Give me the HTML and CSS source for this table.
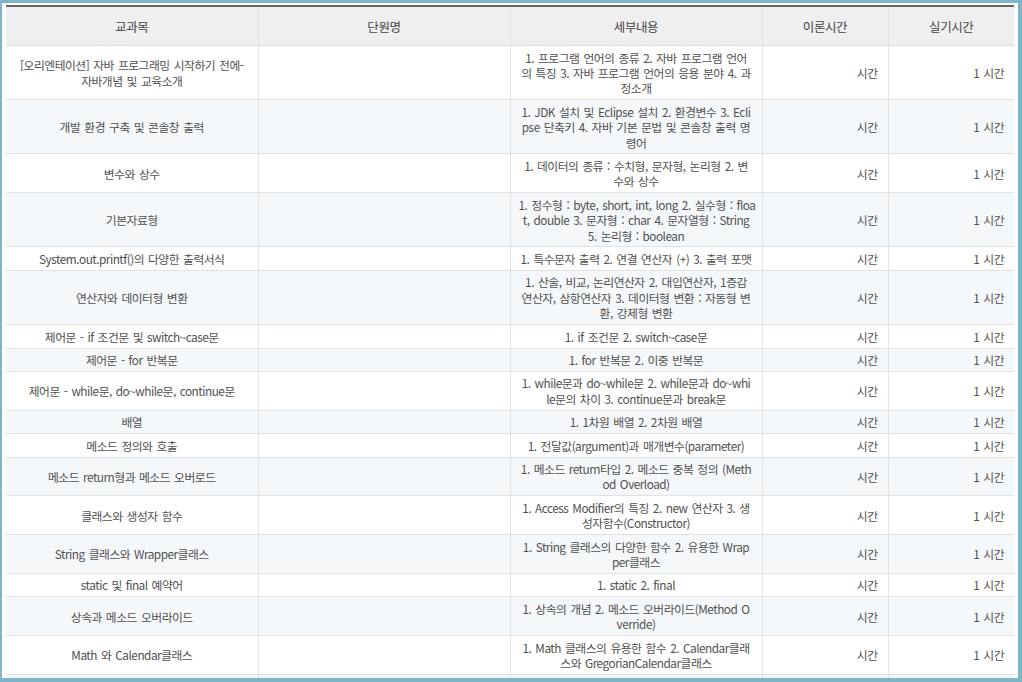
FILE: index.html
```html
<!DOCTYPE html>
<html lang="ko">
<head>
<meta charset="utf-8">
<title>교과목</title>
<link rel="stylesheet" href="styles.css">
</head>
<body>
<div class="frame">
  <table class="curriculum">
    <colgroup>
      <col class="c-subject"><col class="c-unit"><col class="c-detail"><col class="c-time"><col class="c-time">
    </colgroup>
    <thead>
      <tr><th>교과목</th><th>단원명</th><th>세부내용</th><th>이론시간</th><th>실기시간</th></tr>
    </thead>
    <tbody>
      <tr><td class="subject">[오리엔테이션] 자바 프로그래밍 시작하기 전에-<br>자바개념 및 교육소개</td><td></td><td class="detail">1. 프로그램 언어의 종류 2. 자바 프로그램 언어<br>의 특징 3. 자바 프로그램 언어의 응용 분야 4. 과<br>정소개</td><td class="time">시간</td><td class="time">1 시간</td></tr>
      <tr><td class="subject">개발 환경 구축 및 콘솔창 출력</td><td></td><td class="detail">1. JDK 설치 및 Eclipse 설치 2. 환경변수 3. Ecli<br>pse 단축키 4. 자바 기본 문법 및 콘솔창 출력 명<br>령어</td><td class="time">시간</td><td class="time">1 시간</td></tr>
      <tr><td class="subject">변수와 상수</td><td></td><td class="detail">1. 데이터의 종류 : 수치형, 문자형, 논리형 2. 변<br>수와 상수</td><td class="time">시간</td><td class="time">1 시간</td></tr>
      <tr><td class="subject">기본자료형</td><td></td><td class="detail">1. 정수형 : byte, short, int, long 2. 실수형 : floa<br>t, double 3. 문자형 : char 4. 문자열형 : String<br>5. 논리형 : boolean</td><td class="time">시간</td><td class="time">1 시간</td></tr>
      <tr><td class="subject">System.out.printf()의 다양한 출력서식</td><td></td><td class="detail">1. 특수문자 출력 2. 연결 연산자 (+) 3. 출력 포맷</td><td class="time">시간</td><td class="time">1 시간</td></tr>
      <tr><td class="subject">연산자와 데이터형 변환</td><td></td><td class="detail">1. 산술, 비교, 논리연산자 2. 대입연산자, 1증감<br>연산자, 삼항연산자 3. 데이터형 변환 : 자동형 변<br>환, 강제형 변환</td><td class="time">시간</td><td class="time">1 시간</td></tr>
      <tr><td class="subject">제어문 - if 조건문 및 switch~case문</td><td></td><td class="detail">1. if 조건문 2. switch~case문</td><td class="time">시간</td><td class="time">1 시간</td></tr>
      <tr><td class="subject">제어문 - for 반복문</td><td></td><td class="detail">1. for 반복문 2. 이중 반복문</td><td class="time">시간</td><td class="time">1 시간</td></tr>
      <tr><td class="subject">제어문 - while문, do~while문, continue문</td><td></td><td class="detail">1. while문과 do~while문 2. while문과 do~whi<br>le문의 차이 3. continue문과 break문</td><td class="time">시간</td><td class="time">1 시간</td></tr>
      <tr><td class="subject">배열</td><td></td><td class="detail">1. 1차원 배열 2. 2차원 배열</td><td class="time">시간</td><td class="time">1 시간</td></tr>
      <tr><td class="subject">메소드 정의와 호출</td><td></td><td class="detail">1. 전달값(argument)과 매개변수(parameter)</td><td class="time">시간</td><td class="time">1 시간</td></tr>
      <tr><td class="subject">메소드 return형과 메소드 오버로드</td><td></td><td class="detail">1. 메소드 return타입 2. 메소드 중복 정의 (Meth<br>od Overload)</td><td class="time">시간</td><td class="time">1 시간</td></tr>
      <tr><td class="subject">클래스와 생성자 함수</td><td></td><td class="detail">1. Access Modifier의 특징 2. new 연산자 3. 생<br>성자함수(Constructor)</td><td class="time">시간</td><td class="time">1 시간</td></tr>
      <tr><td class="subject">String 클래스와 Wrapper클래스</td><td></td><td class="detail">1. String 클래스의 다양한 함수 2. 유용한 Wrap<br>per클래스</td><td class="time">시간</td><td class="time">1 시간</td></tr>
      <tr><td class="subject">static 및 final 예약어</td><td></td><td class="detail">1. static 2. final</td><td class="time">시간</td><td class="time">1 시간</td></tr>
      <tr><td class="subject">상속과 메소드 오버라이드</td><td></td><td class="detail">1. 상속의 개념 2. 메소드 오버라이드(Method O<br>verride)</td><td class="time">시간</td><td class="time">1 시간</td></tr>
      <tr><td class="subject">Math 와 Calendar클래스</td><td></td><td class="detail">1. Math 클래스의 유용한 함수 2. Calendar클래<br>스와 GregorianCalendar클래스</td><td class="time">시간</td><td class="time">1 시간</td></tr>
      <tr><td class="subject">&nbsp;</td><td></td><td class="detail">&nbsp;</td><td class="time">&nbsp;</td><td class="time">&nbsp;</td></tr>
    </tbody>
  </table>
</div>
</body>
</html>
```

FILE: styles.css
```css
html {
  background: #7db5cb;
}

body {
  margin: 0;
  height: 682px;
  overflow: hidden;
  font-family: "Noto Sans CJK KR", "Noto Sans", sans-serif;
}

.frame {
  box-sizing: border-box;
  height: 675px;
  margin: 3px 4px 0 2px;
  padding: 2px 4px 0 4px;
  background: #ffffff;
  overflow: hidden;
}

.curriculum {
  width: 1008px;
  table-layout: fixed;
  border-collapse: collapse;
  border-top: 2px solid #666666;
}

.c-subject,
.c-unit,
.c-detail {
  width: 252px;
}

.c-time {
  width: 126px;
}

.curriculum th {
  background: #efeff1;
  color: #444444;
  font-size: 12.5px;
  font-weight: 400;
  letter-spacing: -0.4px;
  line-height: 17px;
  padding: 10.5px 8px;
  text-align: center;
  border-bottom: 1px solid #dddddd;
  border-left: 1px solid #e2e2e2;
}

.curriculum th:first-child,
.curriculum td:first-child {
  border-left: 0;
}

.curriculum td {
  color: #505050;
  font-size: 11.8px;
  letter-spacing: -0.5px;
  word-spacing: 1.2px;
  line-height: 15.4px;
  padding: 3.5px 8px;
  vertical-align: middle;
  border-bottom: 1px solid #e2e2e2;
  border-left: 1px solid #e2e2e2;
  white-space: nowrap;
}

.curriculum tbody tr:nth-child(even) td {
  background: #f5f8fb;
}

.subject,
.detail {
  text-align: center;
}

.curriculum td.time {
  text-align: right;
  padding-right: 10px;
}
```
